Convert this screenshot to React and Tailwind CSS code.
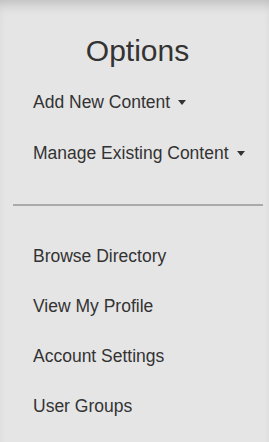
export default function App() {
  const links = ["Browse Directory", "View My Profile", "Account Settings", "User Groups"];
  const menus = ["Add New Content", "Manage Existing Content"];

  return (
    <div
      className="w-[269px] h-[442px] bg-[#e5e5e5] text-[#333] shadow-[inset_0_10px_12px_-6px_rgba(0,0,0,0.18)]"
      style={{ fontFamily: '"Liberation Sans", Arial, sans-serif' }}
    >
      <h3 className="pt-[34px] text-[30px] leading-[33px] text-center pl-[6px]">Options</h3>

      <ul className="mt-[10px] pl-[33px]">
        {menus.map((m) => (
          <li key={m} className="h-[51px] leading-[51px] text-[17.5px] flex items-center">
            <span>{m}</span>
            <span className="ml-[8px] w-0 h-0 border-t-[5px] border-x-[4px] border-x-transparent border-t-[#333]" />
          </li>
        ))}
      </ul>

      <hr className="mt-[25px] ml-[13px] mr-[6px] border-0 h-[2px] bg-[#aaa]" />

      <ul className="mt-[25px] pl-[33px]">
        {links.map((l) => (
          <li key={l} className="h-[50px] leading-[50px] text-[17.5px]">
            {l}
          </li>
        ))}
      </ul>
    </div>
  );
}
